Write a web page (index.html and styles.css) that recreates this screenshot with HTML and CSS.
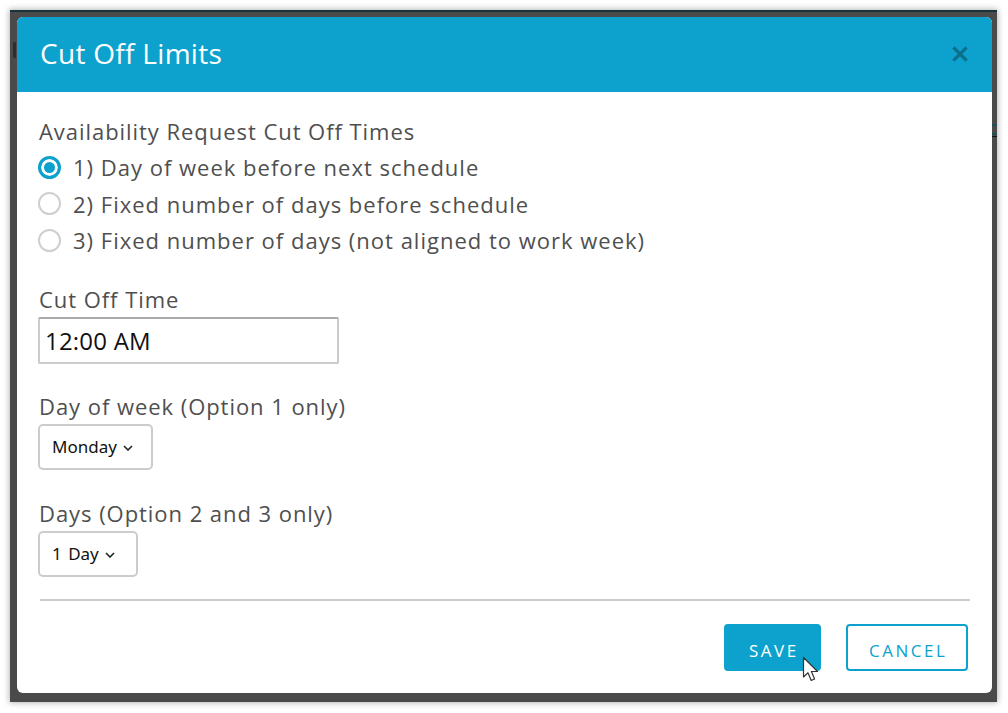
FILE: index.html
```html
<!DOCTYPE html>
<html>
<head>
<meta charset="utf-8">
<title>Cut Off Limits</title>
<link rel="stylesheet" href="styles.css">
</head>
<body>
<div class="frame">
  <span class="ghost ghost-left"></span>
  <span class="ghost ghost-right1"></span>
  <span class="ghost ghost-right2"></span>
  <span class="ghost ghost-rule"></span>
  <div class="modal">
    <div class="modal-header">
      <h1 class="modal-title">Cut Off Limits</h1>
      <svg class="close" width="16" height="16" viewBox="0 0 16 16" aria-label="Close">
        <path d="M2.5 2.5 L13.5 13.5 M13.5 2.5 L2.5 13.5" stroke="#0b6f8d" stroke-width="3.2" stroke-linecap="square"/>
      </svg>
    </div>
    <div class="modal-body">
      <div class="field-label">Availability Request Cut Off Times</div>
      <div class="radio-group">
        <label class="radio-row"><span class="radio checked"></span>1) Day of week before next schedule</label>
        <label class="radio-row"><span class="radio"></span>2) Fixed number of days before schedule</label>
        <label class="radio-row"><span class="radio"></span>3) Fixed number of days (not aligned to work week)</label>
      </div>

      <div class="field-label gap-time">Cut Off Time</div>
      <div class="text-input">12:00 AM</div>

      <div class="field-label gap-day">Day of week (Option 1 only)</div>
      <div class="select select-day">Monday<svg class="chev" width="10" height="6" viewBox="0 0 10 6"><path d="M1 1 L5 5 L9 1" fill="none" stroke="#222" stroke-width="1.6"/></svg></div>

      <div class="field-label gap-days">Days (Option 2 and 3 only)</div>
      <div class="select select-days">1 Day<svg class="chev" width="10" height="6" viewBox="0 0 10 6"><path d="M1 1 L5 5 L9 1" fill="none" stroke="#222" stroke-width="1.6"/></svg></div>

      <div class="divider"></div>

      <div class="actions">
        <button class="btn btn-save">SAVE</button>
        <button class="btn btn-cancel">CANCEL</button>
      </div>
    </div>
  </div>
  <svg class="cursor" width="20" height="28" viewBox="0 0 20 28">
    <path d="M1.5 1.5 L1.5 21 L6 16.8 L9.2 24.5 L12.6 23 L9.4 15.5 L15.5 15.5 Z" fill="#fff" stroke="#333" stroke-width="1.2" stroke-linejoin="round"/>
  </svg>
</div>
</body>
</html>
```

FILE: styles.css
```css
* { box-sizing: border-box; }

html, body {
  margin: 0;
  padding: 0;
  background: #ffffff;
}

body {
  width: 1008px;
  height: 713px;
  overflow: hidden;
  font-family: "Open Sans", "Noto Sans", sans-serif;
}

.frame {
  position: relative;
  margin: 10px 0 0 10px;
  width: 987px;
  height: 692px;
  background: #4a4a4a;
  border-top: 2px solid #17343c;
  padding: 5px 5px 9px 7px;
  box-shadow: 0 0 6px 1px rgba(0, 0, 0, 0.28);
}

.ghost {
  position: absolute;
  display: block;
}
.ghost-left {
  left: 3px;
  top: 30px;
  width: 3px;
  height: 16px;
  background: #2e2e2e;
  border-radius: 1px;
}
.ghost-right1 {
  right: 0;
  top: 112px;
  width: 5px;
  height: 2px;
  background: #1f4d5a;
}
.ghost-right2 {
  right: 0;
  top: 121px;
  width: 5px;
  height: 2px;
  background: #1f4d5a;
}
.ghost-rule {
  right: 0;
  top: 124px;
  width: 5px;
  height: 1px;
  background: #111;
}

.modal {
  position: relative;
  width: 975px;
  height: 676px;
  background: #ffffff;
  border-radius: 6px;
  overflow: hidden;
}

.modal-header {
  height: 75px;
  background: #0ca2cd;
  display: flex;
  align-items: center;
  justify-content: space-between;
  padding: 0 24px 0 23px;
}

.modal-title {
  margin: 0;
  font-family: "Open Sans", sans-serif;
  font-weight: 400;
  font-size: 28px;
  letter-spacing: 0.3px;
  color: #ffffff;
  line-height: 1;
  padding-bottom: 4px;
}

.close {
  display: block;
  margin-top: -2px;
}

.modal-body {
  padding: 24px 23px 0 22px;
  display: flex;
  flex-direction: column;
  align-items: flex-start;
}

.field-label {
  font-size: 22px;
  letter-spacing: 0.95px;
  line-height: 30px;
  color: #4f4f4f;
}

.radio-group {
  margin-top: 3px;
  display: flex;
  flex-direction: column;
}

.radio-row {
  display: flex;
  align-items: center;
  height: 36.5px;
  font-size: 22px;
  letter-spacing: 1px;
  color: #4f4f4f;
}

.radio {
  width: 23px;
  height: 23px;
  border-radius: 50%;
  border: 2px solid #cfcfcf;
  background: #fff;
  margin: 0 12px 0 -1px;
  flex: none;
}
.radio.checked {
  border: 3px solid #0ca2cd;
  background: #0ca2cd;
  box-shadow: inset 0 0 0 3px #ffffff;
}

.gap-time { margin-top: 25px; }
.gap-day { margin-top: 27px; }
.gap-days { margin-top: 28px; }

.text-input {
  margin-top: 3px;
  margin-left: -1px;
  width: 301px;
  height: 47px;
  border: 2px solid #cccccc;
  border-top-color: #a9a9a9;
  border-radius: 2px;
  padding: 0 0 0 5px;
  display: flex;
  align-items: center;
  font-family: "Open Sans", sans-serif;
  font-size: 24px;
  letter-spacing: 0.2px;
  color: #111111;
}

.select {
  margin-top: 3px;
  margin-left: -1px;
  height: 46px;
  border: 2px solid #cccccc;
  border-radius: 5px;
  display: flex;
  align-items: center;
  padding-left: 12px;
  font-family: "Noto Sans", "Open Sans", sans-serif;
  font-size: 17px;
  word-spacing: 2px;
  color: #111111;
}
.select-day { width: 115px; }
.select-days { width: 100px; }

.chev {
  margin-left: 6px;
  margin-top: 2px;
}

.divider {
  margin-top: 22px;
  width: 100%;
  margin-left: 1px;
  height: 2px;
  background: #cccccc;
}

.actions {
  align-self: stretch;
  display: flex;
  justify-content: flex-end;
  gap: 25px;
  margin-top: 23px;
  padding-right: 1px;
}

.btn {
  height: 47px;
  border-radius: 4px;
  font-family: "Open Sans", sans-serif;
  font-size: 17px;
  letter-spacing: 2.5px;
  text-indent: 2.5px;
  padding: 6px 0 0 0;
  cursor: pointer;
}

.btn-save {
  width: 97px;
  background: #0ca2cd;
  border: 2px solid #0ca2cd;
  color: #ffffff;
}

.btn-cancel {
  width: 122px;
  background: #ffffff;
  border: 2px solid #0ca2cd;
  color: #0ca2cd;
}

.cursor {
  position: absolute;
  left: 792px;
  top: 644px;
}
```
